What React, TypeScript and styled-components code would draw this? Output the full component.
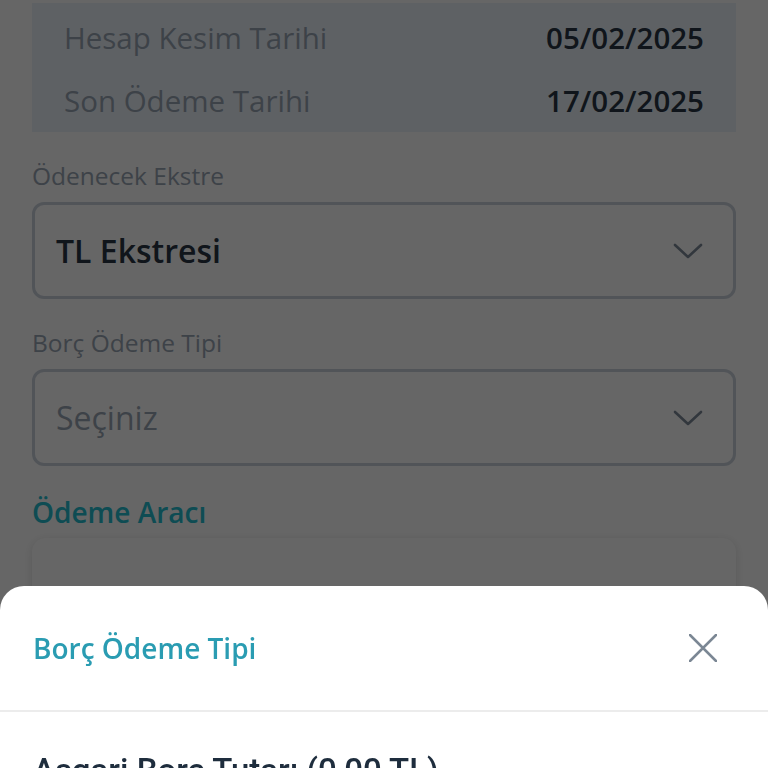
import React from "react";
import styled, { createGlobalStyle } from "styled-components";

const GlobalStyle = createGlobalStyle`
  html, body {
    margin: 0;
    padding: 0;
    background: #ffffff;
    overflow: hidden;
    height: 100%;
  }
  * { box-sizing: border-box; }
`;

const Page = styled.div`
  font-family: "Open Sans", "Noto Sans", sans-serif;
  padding: 3px 32px 0;
  display: flex;
  flex-direction: column;
  height: 768px;
`;

const InfoBox = styled.div`
  background: #ebf3fb;
  padding: 3px 32px 0;
  height: 130px;
  display: flex;
  flex-direction: column;
`;

const InfoRow = styled.div`
  height: 63px;
  display: flex;
  align-items: center;
  justify-content: space-between;
  font-size: 29.5px;
`;

const InfoLabel = styled.span`
  color: #9aa6b4;
`;

const InfoValue = styled.span`
  color: #2a3644;
  font-weight: 600;
`;

const Field = styled.div`
  margin-top: 28px;
  display: flex;
  flex-direction: column;
  gap: 10px;
`;

const FieldLabel = styled.label`
  font-size: 24.5px;
  line-height: 32px;
  color: #9aa6b4;
`;

const Select = styled.div`
  height: 97px;
  border: 3px solid #cbd3dd;
  border-radius: 12px;
  display: flex;
  align-items: center;
  justify-content: space-between;
  padding: 0 30px 0 21px;
`;

const SelectText = styled.span<{ $placeholder?: boolean }>`
  font-size: 32px;
  font-weight: ${(p) => (p.$placeholder ? 400 : 600)};
  color: ${(p) => (p.$placeholder ? "#9aa6b4" : "#2a3644")};
`;

const SectionTitle = styled.h3`
  margin: 28px 0 0;
  font-size: 28px;
  line-height: 36px;
  font-weight: 600;
  color: #23bdd0;
`;

const Card = styled.div`
  margin-top: 8px;
  height: 260px;
  background: #ffffff;
  border-radius: 14px;
  box-shadow: 0 2px 10px rgba(0, 0, 0, 0.12);
`;

const Overlay = styled.div`
  position: fixed;
  inset: 0;
  background: rgba(0, 0, 0, 0.6);
`;

const Sheet = styled.div`
  position: fixed;
  left: 0;
  right: 0;
  bottom: 0;
  top: 586px;
  background: #ffffff;
  border-radius: 24px 24px 0 0;
  display: flex;
  flex-direction: column;
  overflow: hidden;
`;

const SheetHeader = styled.div`
  flex-shrink: 0;
  height: 126px;
  display: flex;
  align-items: center;
  justify-content: space-between;
  padding: 0 45px 0 33px;
  border-bottom: 2px solid #ececec;
`;

const SheetTitle = styled.h2`
  margin: 0;
  font-family: "Open Sans", "Noto Sans", sans-serif;
  font-size: 28px;
  font-weight: 600;
  color: #2a9cb2;
`;

const CloseButton = styled.button`
  width: 40px;
  height: 40px;
  border: none;
  background: none;
  padding: 0;
  display: flex;
  align-items: center;
  justify-content: center;
  cursor: pointer;
`;

const Option = styled.div`
  flex-shrink: 0;
  padding: 37px 33px 0;
  font-family: Roboto, "Liberation Sans", sans-serif;
  font-size: 33px;
  line-height: 44px;
  font-weight: 500;
  color: #1e2d3d;
  white-space: nowrap;
`;

const Chevron = () => (
  <svg width="30" height="16" viewBox="0 0 30 16" fill="none">
    <polyline
      points="2,2 15,14 28,2"
      stroke="#7d8a99"
      strokeWidth="2.6"
      strokeLinecap="round"
      strokeLinejoin="round"
    />
  </svg>
);

const CloseIcon = () => (
  <svg width="28" height="28" viewBox="0 0 28 28" fill="none">
    <path d="M1 1 L27 27 M27 1 L1 27" stroke="#7b8794" strokeWidth="2.5" strokeLinecap="round" />
  </svg>
);

export default function App() {
  return (
    <>
      <GlobalStyle />
      <Page>
        <InfoBox>
          <InfoRow>
            <InfoLabel>Hesap Kesim Tarihi</InfoLabel>
            <InfoValue>05/02/2025</InfoValue>
          </InfoRow>
          <InfoRow>
            <InfoLabel>Son Ödeme Tarihi</InfoLabel>
            <InfoValue>17/02/2025</InfoValue>
          </InfoRow>
        </InfoBox>

        <Field>
          <FieldLabel>Ödenecek Ekstre</FieldLabel>
          <Select>
            <SelectText>TL Ekstresi</SelectText>
            <Chevron />
          </Select>
        </Field>

        <Field>
          <FieldLabel>Borç Ödeme Tipi</FieldLabel>
          <Select>
            <SelectText $placeholder>Seçiniz</SelectText>
            <Chevron />
          </Select>
        </Field>

        <SectionTitle>Ödeme Aracı</SectionTitle>
        <Card />
      </Page>

      <Overlay />
      <Sheet>
        <SheetHeader>
          <SheetTitle>Borç Ödeme Tipi</SheetTitle>
          <CloseButton aria-label="Kapat">
            <CloseIcon />
          </CloseButton>
        </SheetHeader>
        <Option>Asgari Borç Tutarı (0,00 TL)</Option>
      </Sheet>
    </>
  );
}
